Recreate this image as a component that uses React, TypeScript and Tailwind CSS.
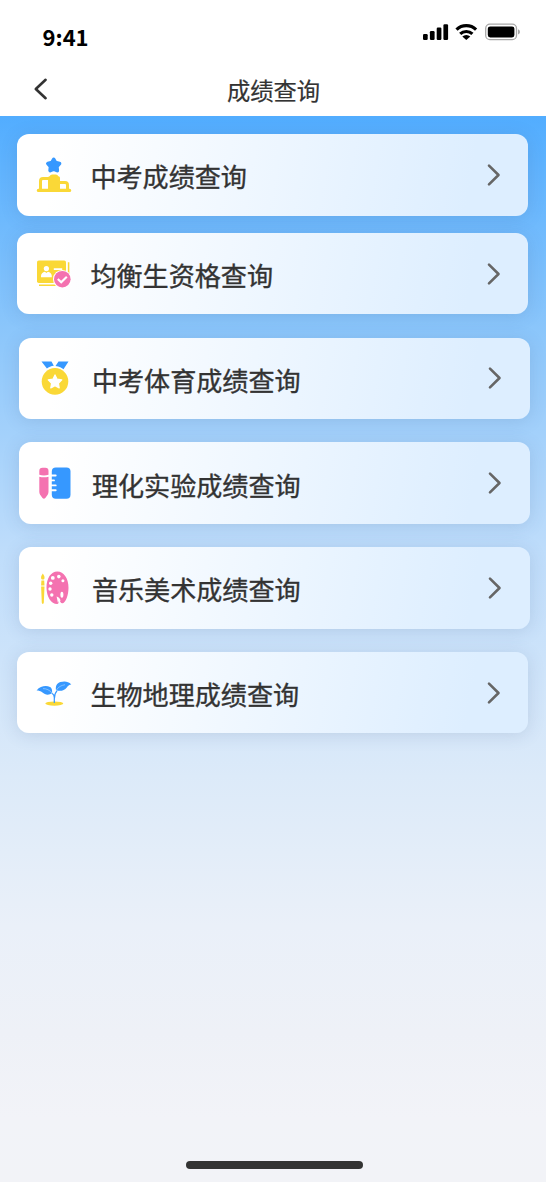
import React from 'react';

interface MenuItem {
  id: string;
  label: string;
  icon: React.ReactNode;
  className: string;
}

const PodiumIcon = () => (
  <svg viewBox="0 0 36 36" className="h-9 w-9" fill="none" aria-hidden="true">
    <path
      d="M17.7 2.3l1.900 3.300 3.900.9-2.600 3 .4 4.100-3.600-1.600-3.600 1.600.4-4.100-2.600-3 3.900-.9z"
      fill="#3698ff"
      stroke="#3698ff"
      strokeWidth="3.600"
      strokeLinejoin="round"
    />
    <path
      d="M4.500 33V24q0-2.500 2.500-2.500H13M23 25.400h6q2.500 0 2.500 2.500V33"
      stroke="#fad837"
      strokeWidth="3"
    />
    <path
      d="M12 33V20.800q0-1.300 1.600-1.500.8-1.900 2.600-1.900h3.600q1.800 0 2.600 1.900 1.600.2 1.600 1.500V33z"
      fill="#fad837"
    />
    <rect x=".8" y="31.700" width="34.400" height="3.400" rx="1.500" fill="#fad837" />
  </svg>
);

const CertificateIcon = () => (
  <svg viewBox="0 0 36 36" className="h-9 w-9" fill="none" aria-hidden="true">
    <rect x="1" y="4.5" width="29" height="22.6" rx="1.8" fill="#fad837" />
    <path d="M3 29.3h17M32.6 6.2v14" stroke="#fad837" strokeWidth="1.5" />
    <circle cx="10.4" cy="12.6" r="2.6" fill="#fff" />
    <path d="M5 21.3v-1.2c0-2.4 1.6-4.1 3.9-4.4l1.5 1.2 1.5-1.2c2.3.3 3.9 2 3.9 4.4v1.2z" fill="#fff" />
    <path d="M17.8 13.1h8.4M20 17h5" stroke="#fff" strokeWidth="1.8" />
    <circle cx="26.3" cy="23.2" r="9.3" fill="#fff" />
    <circle cx="26.3" cy="23.2" r="8.3" fill="#f472b0" />
    <path d="M21.8 23l3.4 3.3 5.6-5.6" stroke="#fff" strokeWidth="2.1" />
  </svg>
);

const MedalIcon = () => (
  <svg viewBox="0 0 36 36" className="h-9 w-9" aria-hidden="true">
    <path
      d="M4.500 1.500h10l2.300 4.300c-2.600.2-5 1.200-6.900 2.800zM21.500 1.500h10l-5 7.800c-1.800-1.600-4-2.900-8-3.400z"
      fill="#3698ff"
    />
    <circle cx="18" cy="21.4" r="14.1" fill="#fff" />
    <circle cx="18" cy="21.4" r="13.3" fill="#fad837" />
    <path
      d="M18 14.900l2.100 4.300 4.700.7-3.400 3.300.8 4.700-4.200-2.200-4.200 2.200.8-4.700-3.400-3.300 4.700-.7z"
      fill="#fff"
      stroke="#fff"
      strokeWidth="1.200"
      strokeLinejoin="round"
    />
  </svg>
);

const PencilRulerIcon = () => (
  <svg viewBox="0 0 36 36" className="h-9 w-9" fill="none" aria-hidden="true">
    <path d="M2.300 9.800V5.900q0-3.200 3.200-3.200h2.800q3.200 0 3.200 3.200v3.900q-4.600 1.300-9.200 0z" fill="#f472b0" />
    <path d="M2.300 11.700q4.600 1.200 9.200 0v15.100q0 1.600-.8 3L8.300 33q-1.400 1.400-2.800 0l-2.400-3.200q-.8-1.400-.8-3z" fill="#f472b0" />
    <rect x="14.800" y="2.400" width="18.700" height="31.300" rx="4" fill="#3698ff" />
    <path
      d="M14 10.500h4.700M14 15.400h3M14 20.400h4.700M14 25.300h4.700"
      stroke="#fff"
      strokeWidth="1.900"
      strokeLinecap="round"
    />
  </svg>
);

const PaletteIcon = () => (
  <svg viewBox="0 0 36 36" className="h-9 w-9" aria-hidden="true">
    <path
      d="M5.800 3.600c1.100 1.700 1.900 2.800 1.700 4.300-.1 1-.6 1.700-1.700 1.700s-1.600-.7-1.700-1.700c-.2-1.500.6-2.600 1.700-4.300zM4.400 10.500h2.800l.3 5H4.100zM4.100 16.400h3.400l-.7 16.400q-.1 1.100-1 1.100t-1-1.100z"
      fill="#fad837"
    />
    <path
      d="M20.300 1.500c6.600 0 11.200 7 11.200 16.200 0 7.300-2.800 14.800-5.800 15.500-2 .4-2.200-1.500-3.300-3-.7-.9-1.200-.2-1 1.100.3 1.600.1 2.800-1.200 2.800-6.200-.2-10.700-7.400-10.700-16.600C9.500 8.400 13.900 1.500 20.300 1.500z"
      fill="#f472b0"
    />
    <path d="M19.600 26.600c1.700.2 3.400 2 4 3.800-.9.6-2.400.1-2.700 2.400z" fill="#fff" />
    <g fill="#fff">
      <circle cx="15.800" cy="7.900" r="1.900" />
      <circle cx="21.800" cy="6.600" r="1.800" />
      <circle cx="25.900" cy="10.700" r="1.500" />
      <circle cx="13.700" cy="13.300" r="1.700" />
      <circle cx="13" cy="19" r="1.700" />
      <circle cx="14.800" cy="25" r="1.700" />
      <ellipse cx="24.900" cy="24.800" rx="1.500" ry="3" />
    </g>
  </svg>
);

const SproutIcon = () => (
  <svg viewBox="0 0 36 36" className="h-9 w-9" fill="none" aria-hidden="true">
    <ellipse cx="18.300" cy="28.600" rx="9" ry="2.100" fill="#fad837" />
    <path
      d="M16 18.300q2.300 1.500 2.300 4.200v5.500M18.400 23.500c0-3.500.5-5.500 2.600-7.600"
      stroke="#3698ff"
      strokeWidth="1.200"
    />
    <path
      d="M.6 15.400C4.500 10.800 10.500 10.200 14 12.100c2.400 1.300 2.100 4.300 2.200 6-3.700 2.700-7.400 1.500-9.700-.6C4.600 15.800 2.800 15.400.6 15.400z"
      fill="#3698ff"
    />
    <path
      d="M35.300 9.400c-2.300.3-3.200 1.300-4.500 3-2.600 3.500-6.700 3.900-10.800 2.800-.7-4 .8-6.800 4.400-8.100 3.500-1.200 7.700-1.100 10.900 2.300z"
      fill="#3698ff"
    />
    <path d="M7 13.600c3.500 0 6.700 1.500 9.200 4.500M20.400 15c2-3.300 5-4.600 8.600-5.300" stroke="#b5d9ff" strokeWidth=".6" />
  </svg>
);

const menuItems: MenuItem[] = [
  { id: 'exam', label: '中考成绩查询', icon: <PodiumIcon />, className: '' },
  { id: 'quota', label: '均衡生资格查询', icon: <CertificateIcon />, className: 'mt-[17.4px]' },
  { id: 'sports', label: '中考体育成绩查询', icon: <MedalIcon />, className: 'mt-[23.2px] ml-[1.5px]' },
  { id: 'lab', label: '理化实验成绩查询', icon: <PencilRulerIcon />, className: 'mt-[23.2px] ml-[1.5px]' },
  { id: 'arts', label: '音乐美术成绩查询', icon: <PaletteIcon />, className: 'mt-[23.3px] ml-[1.5px]' },
  { id: 'biology', label: '生物地理成绩查询', icon: <SproutIcon />, className: 'mt-[23.3px]' },
];

const StatusBar = () => (
  <div className="flex h-16 items-start justify-between pr-[25px] pl-[42.5px]">
    <span className="mt-5 text-[22px] leading-8 font-bold text-black">9:41</span>
    <svg viewBox="0 0 98 18" className="mt-[23px] h-[18px] w-[98px]" fill="none" aria-hidden="true">
      <g fill="#000">
        <rect x="0" y="11" width="4.700" height="6" rx="1.200" />
        <rect x="6.900" y="8" width="4.700" height="9" rx="1.200" />
        <rect x="13.700" y="4.600" width="4.700" height="12.400" rx="1.200" />
        <rect x="20.400" y="1.200" width="4.700" height="15.800" rx="1.200" />
        <path d="M39.300 13.500l4 3.600 4-3.600a5.800 5.800 0 0 0-8 0z" />
      </g>
      <path d="M33.500 6.600a14.300 14.300 0 0 1 19.600 0M37.200 10.900a8.900 8.900 0 0 1 12.200 0" stroke="#000" strokeWidth="3.200" />
      <rect x="62.700" y="1.200" width="30.800" height="15.400" rx="4.200" stroke="#a8a8a8" strokeWidth="1.300" />
      <rect x="64.800" y="3.400" width="26.600" height="11" rx="2.400" fill="#000" />
      <path d="M95 6.200q2 .9 2 2.700t-2 2.700z" fill="#a8a8a8" />
    </svg>
  </div>
);

const Header = () => (
  <div className="relative flex h-[52px] items-start justify-center pl-px">
    <button className="absolute top-[13px] left-[29px] flex h-6 w-6 items-center justify-center" aria-label="返回">
      <svg viewBox="0 0 24 24" className="h-6 w-6" fill="none" aria-hidden="true">
        <path
          d="M16.600 2.800L6.800 12l9.800 9.200"
          stroke="#333"
          strokeWidth="2.600"
          strokeLinecap="round"
          strokeLinejoin="round"
        />
      </svg>
    </button>
    <h1 className="mt-[9px] text-[23.3px] leading-[34px] font-normal text-[#333] [-webkit-text-stroke:0.2px_#333]">
      成绩查询
    </h1>
  </div>
);

const MenuCard: React.FC<{ item: MenuItem }> = ({ item }) => (
  <button
    className={`flex h-[81.5px] w-[511px] shrink-0 items-center rounded-xl bg-linear-[100deg,#ffffff_8%,#ddeeff_88%] pr-[26.5px] pl-[18.5px] shadow-[0_2px_17px_rgba(60,90,130,0.16)] ${item.className}`}
  >
    {item.icon}
    <span className="mt-[3px] ml-[18.5px] text-[26.1px] leading-9 font-normal text-[#333] [-webkit-text-stroke:0.35px_#333]">
      {item.label}
    </span>
    <svg viewBox="0 0 16 24" className="ml-auto h-6 w-4" fill="none" aria-hidden="true">
      <path
        d="M3 2.600L12.500 12 3 21.400"
        stroke="#666"
        strokeWidth="2.600"
        strokeLinecap="round"
        strokeLinejoin="round"
      />
    </svg>
  </button>
);

const App = () => {
  return (
    <div className="flex h-[1182px] w-[546px] flex-col overflow-hidden bg-white font-['Noto_Sans_CJK_SC',sans-serif]">
      <StatusBar />
      <Header />
      <main className="flex flex-1 flex-col items-start bg-linear-[180deg,#52adff_0%,#8bc6fb_20%,#bfddfb_41%,#dceaf9_62%,#eaf0f9_76%,#eef1f7_86%,#f2f3f8_94%,#f2f3f7_100%] pt-[18px] pl-[17.4px]">
        {menuItems.map((item) => (
          <MenuCard key={item.id} item={item} />
        ))}
        <div className="mt-auto mb-[13.5px] ml-[168.6px] h-[7.5px] w-[177px] rounded-full bg-[#333]" />
      </main>
    </div>
  );
};

export default App;
